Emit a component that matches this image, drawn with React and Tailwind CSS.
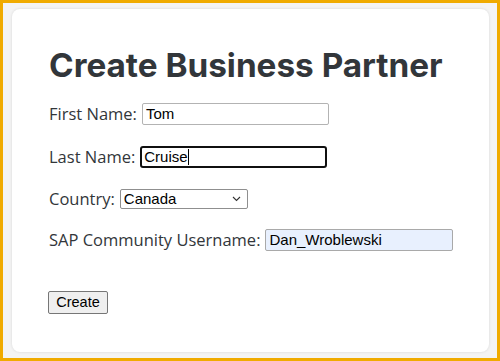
import React from "react";

export default function App() {
  return (
    <div className="w-[500px] h-[361px] bg-[#f0ab00] p-[3px] box-border">
      <div className="w-full h-full bg-[#f4f4f4] pl-[9px] pr-[8px] pt-[6px] pb-[6px] box-border">
        <div className="w-full h-full bg-white rounded-[8px] shadow-[0_0_3px_rgba(0,0,0,0.12)] pl-[37px] pt-[36px] box-border flex flex-col text-[#32363a]">
          <h1 className="text-[33.3px] leading-[40px] font-bold m-0 text-[#32363a] [font-family:Inter,'Open_Sans',sans-serif]">
            Create Business Partner
          </h1>
          <div className="[font-family:'Open_Sans',sans-serif] text-[16.5px]">
            <div className="flex items-center h-[22px] mt-[18px]">
              <span className="mr-[5px]">First Name:</span>
              <div className="w-[187px] h-[22px] border border-[#b3b3b3] rounded-[2px] flex items-center px-[3px] text-[15px] text-black box-border [font-family:'Liberation_Sans',Arial,sans-serif]">
                Tom
              </div>
            </div>
            <div className="flex items-center h-[22px] mt-[21px]">
              <span className="mr-[5px]">Last Name:</span>
              <div className="w-[187px] h-[22px] border-2 border-[#101010] rounded-[3px] flex items-center px-[2px] text-[15px] text-black box-border [font-family:'Liberation_Sans',Arial,sans-serif]">
                Cruise<span className="inline-block w-[1px] h-[16px] bg-black"></span>
              </div>
            </div>
            <div className="flex items-center h-[22px] mt-[20px]">
              <span className="mr-[5px]">Country:</span>
              <div className="w-[128px] h-[20px] border border-[#8f8f8f] rounded-[2px] flex items-center justify-between pl-[3px] pr-[6px] text-[15px] text-black box-border bg-white [font-family:'Liberation_Sans',Arial,sans-serif]">
                <span>Canada</span>
                <svg width="9" height="6" viewBox="0 0 9 6" fill="none">
                  <path d="M1 1 L4.5 4.5 L8 1" stroke="#333" strokeWidth="1.1" />
                </svg>
              </div>
            </div>
            <div className="flex items-center h-[22px] mt-[19px]">
              <span className="mr-[5px]">SAP Community Username:</span>
              <div className="w-[188px] h-[22px] border border-[#a9a9a9] rounded-[2px] flex items-center px-[3px] text-[15px] text-black bg-[#e8f0fe] box-border [font-family:'Liberation_Sans',Arial,sans-serif]">
                Dan_Wroblewski
              </div>
            </div>
            <div className="mt-[40px] -ml-[1px]">
              <button className="w-[60px] h-[23px] border border-[#767676] rounded-[2px] bg-[#efefef] text-[14.5px] text-black flex items-center justify-center [font-family:'Liberation_Sans',Arial,sans-serif]">
                Create
              </button>
            </div>
          </div>
        </div>
      </div>
    </div>
  );
}
